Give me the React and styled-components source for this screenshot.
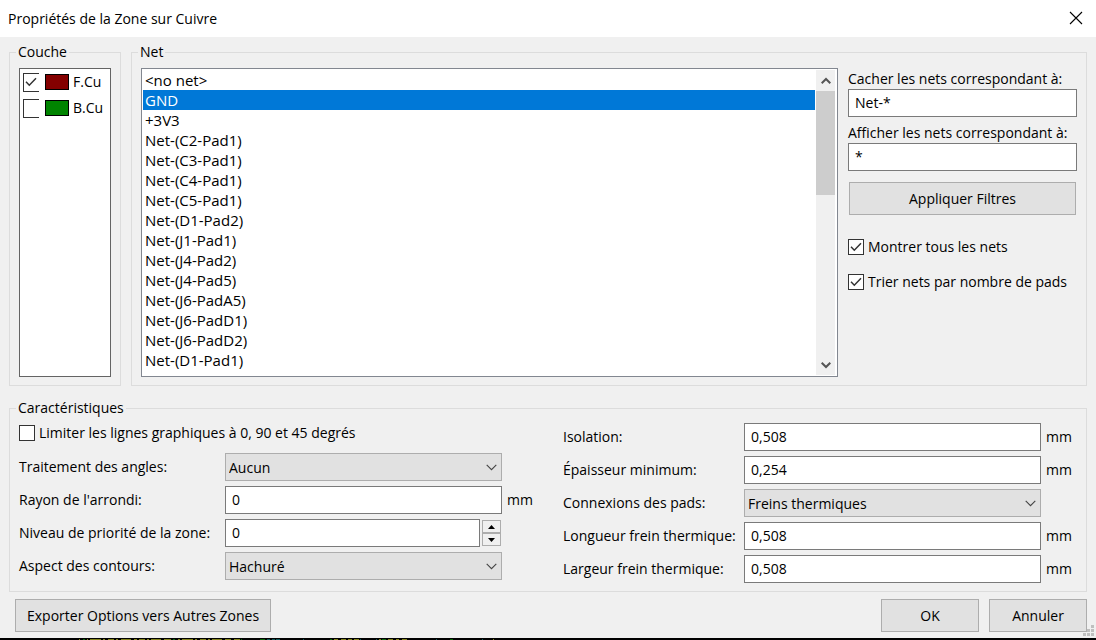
import React, { useState } from "react";
import styled, { createGlobalStyle, css } from "styled-components";

const GlobalStyle = createGlobalStyle`
  *, *::before, *::after { box-sizing: border-box; }
  body { margin: 0; background: #f0f0f0; }
  body, button, input, select {
    font-family: "Open Sans", "Noto Sans", sans-serif;
    font-size: 14px;
    line-height: 20px;
    color: #000;
  }
`;

const Dialog = styled.main`
  position: relative;
  min-height: 100vh;
  display: flex;
  flex-direction: column;
  background: #f0f0f0;
`;

const TitleBar = styled.header`
  height: 37px;
  display: flex;
  align-items: center;
  justify-content: space-between;
  padding: 0 10px 0 8px;
  background: #fff;
`;

const Title = styled.h1`
  margin: 0;
  font-size: 14px;
  line-height: 20px;
  font-weight: 400;
`;

const CloseButton = styled.button`
  display: flex;
  padding: 2px 3px 4px;
  border: 0;
  background: none;
`;

const Content = styled.div`
  flex: 1;
  display: flex;
  flex-direction: column;
  gap: 12px;
  padding: 5px 9px 6px;
`;

const TopRow = styled.div`
  display: flex;
  gap: 10px;
`;

const Group = styled.fieldset`
  min-width: 0;
  margin: 0;
  padding: ${(p) => p.$pad || "6px 9px 8px"};
  border: 1px solid #dcdcdc;
  ${(p) => p.$grow && css`flex: 1;`}
`;

const Legend = styled.legend`
  padding: 0 2px;
  margin-left: -3px;
  height: 20px;
`;

const LayerList = styled.div`
  width: 92px;
  height: 309px;
  padding: 3px;
  display: flex;
  flex-direction: column;
  gap: 6px;
  border: 1px solid #646464;
  background: #fff;
`;

const LayerRow = styled.label`
  display: flex;
  align-items: center;
  height: 20px;
`;

const Swatch = styled.span`
  width: 24px;
  height: 16px;
  margin: 0 4px 0 6px;
  border: 1px solid #000;
  background: ${(p) => p.$color};
`;

const BoxWrap = styled.span`
  display: inline-grid;
  flex: none;
  > * { grid-area: 1 / 1; }
  svg { pointer-events: none; place-self: center; }
`;

const Box = styled.input`
  appearance: none;
  margin: 0;
  width: 16px;
  height: ${(p) => (p.$open ? 19 : 16)}px;
  border: 1px solid #333;
  ${(p) => p.$open && css`border-right: 0;`}
  background: #fff;
`;

const CheckLabel = styled.label`
  display: flex;
  align-items: center;
  gap: 4px;
  height: 20px;
`;

const NetLayout = styled.div`
  display: flex;
  gap: 10px;
`;

const NetList = styled.div`
  flex: 1;
  min-width: 0;
  height: 309px;
  display: flex;
  padding: 1px;
  border: 1px solid #828790;
  background: #fff;
`;

const NetItems = styled.ul`
  flex: 1;
  margin: 0;
  padding: 0;
  list-style: none;
  overflow: hidden;
`;

const NetItem = styled.li`
  height: 20px;
  padding-left: 2px;
  font-size: 15px;
  line-height: 21px;
  white-space: nowrap;
  color: ${(p) => (p.$selected ? "#fff" : "#000")};
  background: ${(p) => (p.$selected ? "#0078d7" : "transparent")};
`;

const ScrollTrack = styled.div`
  width: 19px;
  margin: 0 1px;
  display: flex;
  flex-direction: column;
  background: #f0f0f0;
`;

const ScrollButton = styled.button`
  display: flex;
  align-items: center;
  justify-content: center;
  height: 21px;
  padding: 0;
  border: 0;
  background: none;
`;

const ScrollThumb = styled.div`
  height: 104px;
  margin-bottom: auto;
  background: #cdcdcd;
`;

const Filters = styled.div`
  flex: none;
  width: 229px;
  padding-top: 1px;
  display: flex;
  flex-direction: column;
`;

const FilterField = styled.label`
  display: flex;
  flex-direction: column;
  margin-bottom: 6px;
  white-space: nowrap;
`;

const TextInput = styled.input`
  width: 100%;
  min-width: 0;
  height: 28px;
  padding: 0 6px 2px;
  border: 1px solid #7a7a7a;
  border-radius: 0;
  background: #fff;
  outline: none;
`;

const PushButton = styled.button`
  height: 33px;
  padding: 0 11px;
  border: 1px solid #adadad;
  background: #e1e1e1;
  white-space: nowrap;
  ${(p) => p.$width && css`width: ${p.$width}px;`}
`;

const FilterActions = styled.div`
  display: flex;
  flex-direction: column;
  gap: 15px;
  padding-top: 5px;
  ${PushButton} { margin: 0 1px 7px; }
`;

const Settings = styled.div`
  display: flex;
  gap: 10px;
`;

const LeftColumn = styled.div`
  flex: 1 1 534px;
  padding-top: 5px;
`;

const RightColumn = styled.div`
  flex: 1 1 514px;
  padding-top: 5px;
`;

const Fields = styled.div`
  display: grid;
  grid-template-columns: ${(p) => p.$label}px 1fr ${(p) => p.$unit}px;
  grid-auto-rows: 28px;
  row-gap: 5px;
  align-items: center;
  white-space: nowrap;
  ${CheckLabel} + & { margin-top: 10px; }
`;

const Unit = styled.span`
  padding-left: 5px;
`;

const SelectWrap = styled.span`
  display: grid;
  > * { grid-area: 1 / 1; }
  svg { pointer-events: none; place-self: center end; margin-right: 5px; }
`;

const Select = styled.select`
  appearance: none;
  width: 100%;
  height: 28px;
  padding: 2px 3px 0;
  border: 1px solid #adadad;
  border-radius: 0;
  background: #e1e1e1;
`;

const Spinner = styled.span`
  display: flex;
  align-items: center;
  gap: 2px;
`;

const SpinButtons = styled.span`
  flex: none;
  width: 19px;
  margin-right: 1px;
  display: flex;
  flex-direction: column;
`;

const SpinButton = styled.button`
  display: flex;
  align-items: center;
  justify-content: center;
  height: 13px;
  padding: 0;
  border: 1px solid #adadad;
  background: #f0f0f0;
`;

const Footer = styled.footer`
  display: flex;
  gap: 10px;
  margin: -5px 0 0 6px;
`;

const Spacer = styled.span`
  flex: 1;
`;

const Grip = styled.svg`
  position: absolute;
  right: 2px;
  bottom: 4px;
`;

const Backdrop = styled.div`
  height: 2px;
  overflow: hidden;
  background: #000;
  svg { display: block; }
`;

const nets = [
  "<no net>", "GND", "+3V3", "Net-(C2-Pad1)", "Net-(C3-Pad1)", "Net-(C4-Pad1)",
  "Net-(C5-Pad1)", "Net-(D1-Pad2)", "Net-(J1-Pad1)", "Net-(J4-Pad2)", "Net-(J4-Pad5)",
  "Net-(J6-PadA5)", "Net-(J6-PadD1)", "Net-(J6-PadD2)", "Net-(D1-Pad1)",
];

const olive = "#84841c";
const green = "#0a640a";
const teal = "#0f5555";

const traces = [
  [79, 1, olive], [83, 2, green], [87, 1, olive], [90, 11, olive], [103, 2, olive],
  [108, 6, olive], [116, 2, olive], [121, 10, olive], [134, 3, olive], [139, 6, olive],
  [147, 2, olive], [151, 10, olive], [164, 7, olive], [173, 2, green], [178, 2, olive],
  [182, 11, olive], [195, 2, olive], [200, 6, olive], [208, 2, olive], [212, 10, olive],
  [225, 6, olive], [234, 6, olive], [241, 1, green], [260, 5, green], [267, 3, teal],
  [272, 3, teal], [276, 4, teal], [303, 1, teal], [330, 2, green], [334, 4, olive],
  [341, 5, olive], [348, 4, olive], [354, 5, olive], [360, 1, teal], [376, 1, teal],
  [379, 2, olive], [382, 4, green], [388, 5, olive], [396, 3, olive], [402, 5, olive],
  [436, 1, teal], [450, 3, green], [482, 1, teal], [493, 1, olive],
];

function CheckBox({ open, initial }) {
  const [on, setOn] = useState(initial);
  return (
    <BoxWrap>
      <Box type="checkbox" $open={open} checked={on} onChange={() => setOn(!on)} />
      {on && (
        <svg width="12" height="10" viewBox="0 0 12 10" fill="none" stroke="#333" strokeWidth="1.5">
          <path d="M1 4.8 L4.3 8.2 L11 1.3" />
        </svg>
      )}
    </BoxWrap>
  );
}

function DropDown({ id, value }) {
  return (
    <SelectWrap>
      <Select id={id} defaultValue={value}>
        <option>{value}</option>
      </Select>
      <svg width="11" height="7" viewBox="0 0 11 7" fill="none" stroke="#444" strokeWidth="1.1">
        <path d="M0.7 0.8 L5.5 5.6 L10.3 0.8" />
      </svg>
    </SelectWrap>
  );
}

function Measure({ id, label, value }) {
  return (
    <>
      <label htmlFor={id}>{label}</label>
      <TextInput id={id} defaultValue={value} />
      <Unit>mm</Unit>
    </>
  );
}

function Choice({ id, label, value }) {
  return (
    <>
      <label htmlFor={id}>{label}</label>
      <DropDown id={id} value={value} />
      <Unit />
    </>
  );
}

export default function App() {
  const [selected, setSelected] = useState("GND");
  return (
    <>
      <GlobalStyle />
      <Dialog>
        <TitleBar>
          <Title>Propriétés de la Zone sur Cuivre</Title>
          <CloseButton aria-label="Fermer">
            <svg width="14" height="14" viewBox="0 0 14 14" stroke="#000" strokeWidth="1.1">
              <path d="M1 1 L13 13 M13 1 L1 13" />
            </svg>
          </CloseButton>
        </TitleBar>

        <Content>
          <TopRow>
            <Group>
              <Legend>Couche</Legend>
              <LayerList>
                <LayerRow>
                  <CheckBox open initial={true} />
                  <Swatch $color="#840000" />
                  F.Cu
                </LayerRow>
                <LayerRow>
                  <CheckBox open initial={false} />
                  <Swatch $color="#008400" />
                  B.Cu
                </LayerRow>
              </LayerList>
            </Group>

            <Group $grow>
              <Legend>Net</Legend>
              <NetLayout>
                <NetList>
                  <NetItems role="listbox" aria-label="Net">
                    {nets.map((net) => (
                      <NetItem
                        key={net}
                        role="option"
                        aria-selected={net === selected}
                        $selected={net === selected}
                        onClick={() => setSelected(net)}
                      >
                        {net}
                      </NetItem>
                    ))}
                  </NetItems>
                  <ScrollTrack>
                    <ScrollButton aria-label="Monter">
                      <svg width="10" height="8" viewBox="0 0 10 8" fill="none" stroke="#555" strokeWidth="2">
                        <path d="M0.7 6.3 L5 2 L9.3 6.3" />
                      </svg>
                    </ScrollButton>
                    <ScrollThumb />
                    <ScrollButton aria-label="Descendre">
                      <svg width="10" height="8" viewBox="0 0 10 8" fill="none" stroke="#555" strokeWidth="2">
                        <path d="M0.7 1.7 L5 6 L9.3 1.7" />
                      </svg>
                    </ScrollButton>
                  </ScrollTrack>
                </NetList>

                <Filters>
                  <FilterField>
                    Cacher les nets correspondant à:
                    <TextInput defaultValue="Net-*" />
                  </FilterField>
                  <FilterField>
                    Afficher les nets correspondant à:
                    <TextInput defaultValue="*" />
                  </FilterField>
                  <FilterActions>
                    <PushButton>Appliquer Filtres</PushButton>
                    <CheckLabel><CheckBox initial={true} />Montrer tous les nets</CheckLabel>
                    <CheckLabel><CheckBox initial={true} />Trier nets par nombre de pads</CheckLabel>
                  </FilterActions>
                </Filters>
              </NetLayout>
            </Group>
          </TopRow>

          <Group $pad="0 9px 8px">
            <Legend>Caractéristiques</Legend>
            <Settings>
              <LeftColumn>
                <CheckLabel>
                  <CheckBox initial={false} />
                  Limiter les lignes graphiques à 0, 90 et 45 degrés
                </CheckLabel>
                <Fields $label={206} $unit={51}>
                  <Choice id="corners" label="Traitement des angles:" value="Aucun" />
                  <Measure id="radius" label="Rayon de l'arrondi:" value="0" />
                  <label htmlFor="priority">Niveau de priorité de la zone:</label>
                  <Spinner>
                    <TextInput id="priority" defaultValue="0" />
                    <SpinButtons>
                      <SpinButton aria-label="Augmenter">
                        <svg width="7" height="4" viewBox="0 0 7 4"><path d="M0 4 L3.5 0 L7 4 Z" /></svg>
                      </SpinButton>
                      <SpinButton aria-label="Diminuer">
                        <svg width="7" height="4" viewBox="0 0 7 4"><path d="M0 0 L3.5 4 L7 0 Z" /></svg>
                      </SpinButton>
                    </SpinButtons>
                  </Spinner>
                  <Unit />
                  <Choice id="outline" label="Aspect des contours:" value="Hachuré" />
                </Fields>
              </LeftColumn>
              <RightColumn>
                <Fields $label={181} $unit={36}>
                  <Measure id="clearance" label="Isolation:" value="0,508" />
                  <Measure id="minwidth" label="Épaisseur minimum:" value="0,254" />
                  <Choice id="pads" label="Connexions des pads:" value="Freins thermiques" />
                  <Measure id="gap" label="Longueur frein thermique:" value="0,508" />
                  <Measure id="spoke" label="Largeur frein thermique:" value="0,508" />
                </Fields>
              </RightColumn>
            </Settings>
          </Group>

          <Footer>
            <PushButton>Exporter Options vers Autres Zones</PushButton>
            <Spacer />
            <PushButton $width={98}>OK</PushButton>
            <PushButton $width={98}>Annuler</PushButton>
          </Footer>
        </Content>

        <Grip width="11" height="11" viewBox="0 0 11 11" fill="#bfbfbf" aria-hidden="true">
          <path d="M8 0h3v3h-3z M4 4h3v3h-3z M8 4h3v3h-3z M0 8h3v3h-3z M4 8h3v3h-3z M8 8h3v3h-3z" />
        </Grip>
        <Backdrop>
          <svg width="500" height="2" aria-hidden="true">
            {traces.map(([x, width, color]) => (
              <rect key={x} x={x} y="1" width={width} height="1" fill={color} />
            ))}
          </svg>
        </Backdrop>
      </Dialog>
    </>
  );
}
